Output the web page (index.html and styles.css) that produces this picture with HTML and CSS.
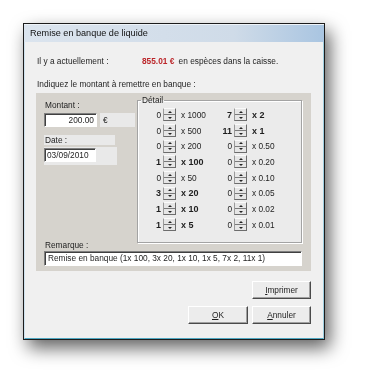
FILE: index.html
```html
<!DOCTYPE html>
<html>
<head>
<meta charset="utf-8">
<link rel="stylesheet" href="styles.css">
</head>
<body>
<div class="dialog">
  <div class="titlebar">Remise en banque de liquide</div>
  <div class="content">
    <div class="line1"><span class="lab">Il y a actuellement :</span><span class="amount">855.01 €</span> en espèces dans la caisse.</div>
    <div class="line2">Indiquez le montant à remettre en banque :</div>
    <div class="panel">
      <div class="grid">
        <div class="leftcol">
          <div class="lbl-montant">Montant :</div>
          <div class="amount-row"><div class="input amt">200.00</div><div class="cur">€</div></div>
          <div class="date-lbl">Date :</div>
          <div class="date-box"><div class="input date">03/09/2010</div></div>
          <div class="rem-lbl">Remarque :</div>
        </div>
        <div class="group">
          <span class="legend">Détail</span>
          <div class="cells">
            <div class="cell"><span class="n">0</span><span class="sp"></span><span class="x">x 1000</span></div>
            <div class="cell"><span class="n">0</span><span class="sp"></span><span class="x">x 500</span></div>
            <div class="cell"><span class="n">0</span><span class="sp"></span><span class="x">x 200</span></div>
            <div class="cell b"><span class="n">1</span><span class="sp"></span><span class="x">x 100</span></div>
            <div class="cell"><span class="n">0</span><span class="sp"></span><span class="x">x 50</span></div>
            <div class="cell b"><span class="n">3</span><span class="sp"></span><span class="x">x 20</span></div>
            <div class="cell b"><span class="n">1</span><span class="sp"></span><span class="x">x 10</span></div>
            <div class="cell b"><span class="n">1</span><span class="sp"></span><span class="x">x 5</span></div>
            <div class="cell b"><span class="n">7</span><span class="sp"></span><span class="x">x 2</span></div>
            <div class="cell b"><span class="n">11</span><span class="sp"></span><span class="x">x 1</span></div>
            <div class="cell"><span class="n">0</span><span class="sp"></span><span class="x">x 0.50</span></div>
            <div class="cell"><span class="n">0</span><span class="sp"></span><span class="x">x 0.20</span></div>
            <div class="cell"><span class="n">0</span><span class="sp"></span><span class="x">x 0.10</span></div>
            <div class="cell"><span class="n">0</span><span class="sp"></span><span class="x">x 0.05</span></div>
            <div class="cell"><span class="n">0</span><span class="sp"></span><span class="x">x 0.02</span></div>
            <div class="cell"><span class="n">0</span><span class="sp"></span><span class="x">x 0.01</span></div>
          </div>
        </div>
      </div>
      <div class="input remark">Remise en banque (1x 100, 3x 20, 1x 10, 1x 5, 7x 2, 11x 1)</div>
    </div>
    <div class="buttons">
      <div class="btnrow"><button class="btn"><u>I</u>mprimer</button></div>
      <div class="btnrow"><button class="btn ok"><u>O</u>K</button><button class="btn"><u>A</u>nnuler</button></div>
    </div>
  </div>
</div>
</body>
</html>
```

FILE: styles.css
```css
* { box-sizing: border-box; }
html, body { margin: 0; padding: 0; background: #fff; }
body {
  font-family: "Liberation Sans", Arial, sans-serif;
  font-size: 8.3px;
  color: #1e1e1e;
  padding: 23px 0 0 23px;
  min-height: 383px;
}
.dialog {
  width: 302px;
  height: 317px;
  border: 1px solid #1c1c1c;
  background: #f0f0f0;
  filter: drop-shadow(5px 8px 9px rgba(0,0,0,.62));
  display: flex;
  flex-direction: column;
}
.titlebar {
  height: 18px;
  line-height: 18px;
  padding-left: 6px;
  font-size: 9.1px;
  color: #111;
  background: linear-gradient(to right, #dbe4ee 0%, #cfdbe8 70%, #a9c5e1 100%);
  box-shadow: inset 0 1px #eef3f8;
}
.content {
  flex: 1;
  padding: 13px 12px 0 12px;
  border: 1px solid;
  border-top: 0;
  border-color: #cfe2ee #9fcfe0 #4fa8c2 #cfe2ee;
}
.line1, .line2 { line-height: 12px; padding-left: 0; white-space: nowrap; }
.line2 { margin-top: 11px; }
.lab { display: inline-block; width: 105px; }
.amount { font-weight: bold; color: #bb2529; margin-right: 2px; }
.panel {
  margin-top: 3px;
  margin-left: -1px;
  height: 178px;
  background: #d6d3cd;
  padding: 6px 9px 5px 8px;
}
.grid { display: flex; }
.leftcol {
  width: 93px;
  height: 152px;
  display: flex;
  flex-direction: column;
  align-items: flex-start;
}
.lbl-montant { line-height: 13px; height: 13px; padding-left: 1px; }
.amount-row { display: flex; margin-top: 1px; }
.input {
  background: #fff;
  border: 1px solid;
  border-color: #7f7f7f #fff #fff #7f7f7f;
  box-shadow: inset 1px 1px #404040;
  height: 14px;
  line-height: 12px;
  padding: 0 2px;
  white-space: nowrap;
  overflow: hidden;
}
.amt { width: 53px; text-align: right; }
.cur {
  margin-left: 3px;
  width: 35px;
  height: 14px;
  line-height: 14px;
  background: #e9e9e9;
  padding-left: 3px;
}
.date-lbl {
  margin-top: 8px;
  width: 71px;
  height: 10px;
  line-height: 10px;
  background: #e9e9e9;
  padding-left: 1px;
}
.date-box {
  margin-top: 2px;
  width: 73px;
  height: 18px;
  background: #e9e9e9;
  padding-top: 1px;
}
.date { width: 52px; }
.rem-lbl { margin-top: auto; line-height: 12px; padding-left: 1px; }
.group {
  position: relative;
  width: 165px;
  height: 143px;
  margin-top: 1px;
  border: 1px solid #a3a3a3;
  box-shadow: inset 1px 1px #fff, 1px 1px #fff;
  background: #ebebeb;
  padding: 6px 0 0 3px;
}
.legend {
  position: absolute;
  top: -6px;
  left: 3px;
  padding: 0 1px;
  line-height: 10px;
  background: linear-gradient(#d6d3cd 50%, #ebebeb 50%);
}
.cells {
  display: grid;
  grid-template-columns: 71px auto;
  grid-template-rows: repeat(8, 15.7px);
  grid-auto-flow: column;
}
.cell { display: flex; align-items: center; white-space: nowrap; }
.cell.b { font-weight: bold; font-size: 9px; }
.n { width: 20px; text-align: right; }
.x { margin-left: 5px; }
.sp {
  position: relative;
  margin-left: 2px;
  width: 13px;
  height: 13px;
  border: 1px solid;
  border-color: #fafafa #6c6c6c #6c6c6c #9a9a9a;
  background: linear-gradient(#e6e6e6 0 5px, #7a7a7a 5px 6px, #e6e6e6 6px);
}
.sp::before, .sp::after {
  content: "";
  position: absolute;
  left: 3.5px;
  border-left: 2px solid transparent;
  border-right: 2px solid transparent;
}
.sp::before { top: 1.5px; border-bottom: 2px solid #222; }
.sp::after { top: 7.5px; border-top: 2px solid #222; }
.remark { width: 258px; height: 15px; line-height: 13px; padding-left: 3px; }
.buttons {
  margin-top: 10px;
  display: flex;
  flex-direction: column;
  align-items: flex-end;
  gap: 7px;
}
.btnrow { display: flex; gap: 4px; }
.btn {
  width: 59px;
  height: 18px;
  padding: 0;
  font: inherit;
  color: #1e1e1e;
  background: #ececec;
  border: 1px solid;
  border-color: #fff #4a4a4a #4a4a4a #fff;
  box-shadow: inset -1px -1px #a0a0a0;
}
.btn.ok { width: 60px; }
```
